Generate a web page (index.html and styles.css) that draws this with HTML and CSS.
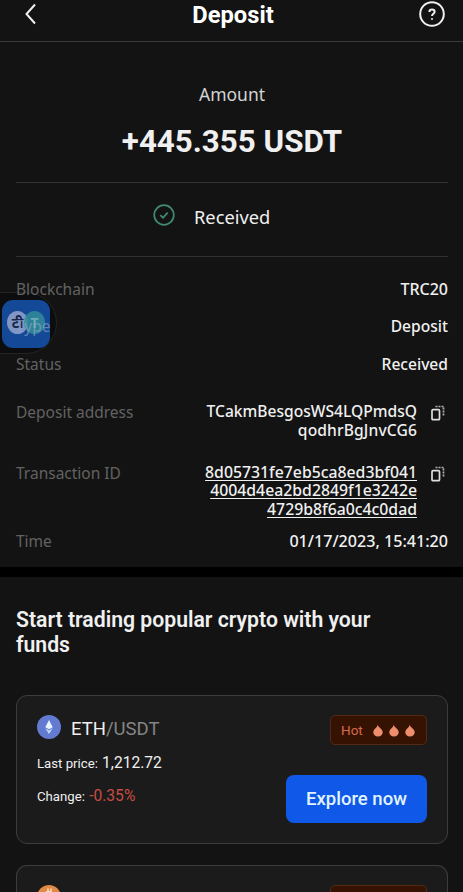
FILE: index.html
```html
<!DOCTYPE html>
<html lang="en">
<head>
    <meta charset="UTF-8">
    <meta name="viewport" content="width=device-width, initial-scale=1.0">
    <title>Deposit</title>
    <link rel="stylesheet" href="styles.css">
</head>
<body>

    <header class="topbar">
        <svg class="back" viewBox="0 0 14 22"><path d="M11 1.500 L2.500 11 L11 20.500"/></svg>
        <h1>Deposit</h1>
        <svg class="help" viewBox="0 0 26 26">
            <circle cx="13" cy="13" r="11.800"/>
            <path d="M10.400 10.900 C10.400 7.800 15.600 7.800 15.600 10.900 C15.600 12.800 13 12.800 13 15"/>
            <path d="M13 17.200 V18.800"/>
        </svg>
    </header>

    <section class="amount">
        <div class="amount-label">Amount</div>
        <div class="amount-value">+445.355 USDT</div>
    </section>

    <div class="received">
        <svg viewBox="0 0 22 22">
            <circle cx="11" cy="11" r="9.800"/>
            <path d="M7.200 11.200 L10 13.700 L14.700 8.700"/>
        </svg>
        <span>Received</span>
    </div>

    <section class="details">
        <!-- Floating translate bubble -->
        <div class="bubble">
            <div class="bubble-icon">
                <span class="circle hindi">टी</span>
                <span class="circle latin">T</span>
            </div>
        </div>

        <div class="row">
            <span class="label blockchain">Blockchain</span>
            <span class="value chain">TRC20</span>
        </div>
        <div class="row">
            <span class="label type">Type</span>
            <span class="value">Deposit</span>
        </div>
        <div class="row">
            <span class="label">Status</span>
            <span class="value">Received</span>
        </div>
        <div class="row address">
            <span class="label">Deposit address</span>
            <span class="value">TCakmBesgosWS4LQPmdsQ<br><span class="wide">qodhrBgJnvCG6</span></span>
            <svg class="copy" viewBox="0 0 14 16"><rect x="1" y="4.700" width="7.500" height="10" rx="1"/><path class="dots" d="M4.500 1.500 H12.500 V11.500"/></svg>
        </div>
        <div class="row txid">
            <span class="label">Transaction ID</span>
            <span class="value">8d05731fe7eb5ca8ed3bf041<br>4004d4ea2bd2849f1e3242e<br>4729b8f6a0c4c0dad</span>
            <svg class="copy" viewBox="0 0 14 16"><rect x="1" y="4.700" width="7.500" height="10" rx="1"/><path class="dots" d="M4.500 1.500 H12.500 V11.500"/></svg>
        </div>
        <div class="row time">
            <span class="label">Time</span>
            <span class="value">01/17/2023, 15:41:20</span>
        </div>
    </section>

    <section class="trading">
        <h2>Start trading popular crypto with your funds</h2>

        <div class="card">
            <div class="card-head">
                <svg class="coin" viewBox="0 0 24 24">
                    <circle cx="12" cy="12" r="12" fill="#627bd0"/>
                    <path d="M12 5 L8.300 12.200 L12 14.300 L15.700 12.200 Z" fill="#e8f5ff"/>
                    <path d="M8.300 13.300 L12 19 L15.700 13.300 L12 15.400 Z" fill="#c3dcfa"/>
                </svg>
                <div class="pair">ETH<span>/USDT</span></div>
                <div class="hot">
                    <span>Hot</span>
                    <svg viewBox="0 0 10 13"><path d="M4.500 0.500 C5 3.300 9.700 4.800 9.700 8.300 C9.700 11 7.700 12.500 5 12.500 C2.300 12.500 0.300 11 0.300 8.300 C0.300 6.500 1.500 5.300 2.500 4.300 C3.800 3.200 4.500 2.200 4.500 0.500 Z"/></svg>
                    <svg viewBox="0 0 10 13"><path d="M4.500 0.500 C5 3.300 9.700 4.800 9.700 8.300 C9.700 11 7.700 12.500 5 12.500 C2.300 12.500 0.300 11 0.300 8.300 C0.300 6.500 1.500 5.300 2.500 4.300 C3.800 3.200 4.500 2.200 4.500 0.500 Z"/></svg>
                    <svg viewBox="0 0 10 13"><path d="M4.500 0.500 C5 3.300 9.700 4.800 9.700 8.300 C9.700 11 7.700 12.500 5 12.500 C2.300 12.500 0.300 11 0.300 8.300 C0.300 6.500 1.500 5.300 2.500 4.300 C3.800 3.200 4.500 2.200 4.500 0.500 Z"/></svg>
                </div>
            </div>
            <div class="card-body">
                <div class="stats">
                    <div>Last price: <span class="price">1,212.72</span></div>
                    <div>Change: <span class="change">-0.35%</span></div>
                </div>
                <button>Explore now</button>
            </div>
        </div>

        <div class="card last">
            <div class="card-head">
                <svg class="coin" viewBox="0 0 24 24">
                    <circle cx="12" cy="12" r="12" fill="#e08a45"/>
                    <path d="M11 3.500 V7 M14 3.500 V7 M9 7 H14 V12 H9 V17 H15" fill="none" stroke="#ffe9d0" stroke-width="1.300"/>
                </svg>
                <div class="hot"></div>
            </div>
        </div>
    </section>

</body>
</html>
```
FILE: styles.css
```css
* {
    box-sizing: border-box;
}

body {
    margin: 0;
    background-color: #131313;
    color: #f0f0f0;
    font-family: Roboto, sans-serif;
}

.topbar {
    display: flex;
    justify-content: space-between;
    align-items: flex-start;
    height: 42px;
    padding: 0 18px 0 24px;
    border-bottom: 1px solid #3a3a3a;
}

.topbar svg {
    fill: none;
    stroke: #f0f0f0;
    stroke-width: 2;
}

.back {
    width: 14px;
    height: 22px;
    margin-top: 3px;
}

.topbar h1 {
    margin: 1px 0 0 9px;
    font-size: 23.7px;
    line-height: 28px;
    font-weight: 700;
    color: #fff;
}

.help {
    width: 26px;
    height: 26px;
    margin-top: 1px;
}

.amount {
    height: 141px;
    margin: 0 15px 0 16px;
    padding-top: 39px;
    border-bottom: 1px solid #303030;
    text-align: center;
}

.amount-label {
    font-family: "Noto Sans", sans-serif;
    font-size: 17.5px;
    line-height: 26px;
    color: #d4d4d4;
}

.amount-value {
    margin-top: 15px;
    font-size: 31.3px;
    line-height: 40px;
    font-weight: 700;
}

.received {
    display: flex;
    align-items: flex-start;
    gap: 19px;
    height: 74px;
    margin: 0 15px 0 16px;
    padding: 20px 0 0 137px;
    border-bottom: 1px solid #303030;
    font-family: "Noto Sans", sans-serif;
    font-size: 18.3px;
    line-height: 27px;
}

.received svg {
    width: 22px;
    height: 22px;
    margin-top: 1px;
    fill: none;
    stroke: #418a73;
    stroke-width: 1.7;
}

.details {
    position: relative;
    height: 310px;
    padding: 20px 15px 0 16px;
    font-family: "Noto Sans", sans-serif;
    font-size: 15.6px;
    line-height: 24px;
}

.row {
    display: flex;
    margin-bottom: 13.3px;
}

.label {
    flex: 1;
    color: #626262;
    font-size: 15.5px;
}

.value {
    font-weight: 500;
    text-align: right;
    white-space: nowrap;
}

.chain {
    font-size: 16px;
}

/* labels that show through the bubble */
.blockchain, .type {
    z-index: 1;
}

.type {
    color: rgba(140, 170, 195, 0.65);
}

.address {
    margin: 24px 0 21px;
}

.address .value {
    line-height: 19px;
    padding-top: 2px;
}

.wide {
    letter-spacing: 0.13px;
}

.txid {
    margin-bottom: 11px;
}

.txid .value {
    font-size: 15.8px;
    line-height: 18.5px;
    padding-top: 2px;
    text-decoration: underline;
    text-underline-offset: 2px;
    text-decoration-thickness: 1px;
}

.time .value {
    font-size: 16.1px;
}

.copy {
    width: 14px;
    height: 16px;
    margin: 5px 3px 0 14px;
    fill: none;
    stroke: #dedede;
    stroke-width: 1.7;
}

.dots {
    stroke-dasharray: 2 1;
    stroke: #b0b0b0;
}

.bubble {
    position: absolute;
    left: -40px;
    top: 35px;
    width: 97px;
    height: 62px;
    border: 1px solid #242424;
    border-radius: 31px;
    background-color: rgba(5, 7, 12, 0.45);
}

.bubble-icon {
    position: absolute;
    left: 41px;
    top: 7px;
    display: flex;
    width: 48px;
    height: 48px;
    padding: 11px 5px;
    border-radius: 11px;
    background-color: rgba(20, 79, 160, 0.93);
}

.circle {
    width: 23px;
    height: 23px;
    border-radius: 50%;
    font-size: 14px;
    font-weight: 700;
    line-height: 23px;
    text-align: center;
}

.hindi {
    background-color: #8196c4;
    color: #15264c;
}

.latin {
    margin-left: -4px;
    background-color: rgba(51, 140, 155, 0.85);
    color: #6fa9b8;
}

.trading {
    height: 325px;
    overflow: hidden;
    padding: 30px 15px 0 16px;
    border-top: 10px solid #000;
}

.trading h2 {
    margin: 0 0 38px;
    padding-right: 50px;
    font-size: 21.2px;
    line-height: 25px;
    font-weight: 600;
}

.card {
    height: 149px;
    margin-bottom: 21px;
    padding: 19px 20px;
    border: 1.5px solid #3d3d3d;
    border-radius: 11px;
    background-color: #1b1b1b;
}

.last {
    height: 40px;
    margin-bottom: 0;
    border-bottom: none;
    border-radius: 11px 11px 0 0;
}

.card-head {
    display: flex;
}

.coin {
    width: 24px;
    height: 24px;
}

.pair {
    margin-left: 10px;
    font-size: 18.5px;
    line-height: 28px;
}

.pair span {
    color: #858585;
}

.hot {
    display: flex;
    align-items: center;
    gap: 6px;
    width: 97px;
    height: 30px;
    margin-left: auto;
    padding-left: 10px;
    border: 1px solid #552a12;
    border-radius: 5px;
    background-color: #361203;
    color: #d9694a;
    font-size: 13.5px;
}

.hot span {
    margin-right: 4px;
}

.hot svg {
    width: 10px;
    height: 13px;
    fill: #ee8e6c;
}

.card-body {
    display: flex;
    justify-content: space-between;
}

.stats {
    padding-top: 6px;
    font-size: 13.2px;
    line-height: 24px;
}

.stats div {
    margin-bottom: 8px;
}

.price, .change {
    font-size: 15.6px;
}

.price, .change {
    margin-left: 1px;
}

.change {
    color: #c74d43;
}

.card button {
    width: 141px;
    height: 48px;
    margin-top: 30px;
    border: none;
    border-radius: 8px;
    background-color: #1059e8;
    color: #e0f4ff;
    font-family: Roboto, sans-serif;
    font-size: 18.5px;
    font-weight: 500;
}
```
